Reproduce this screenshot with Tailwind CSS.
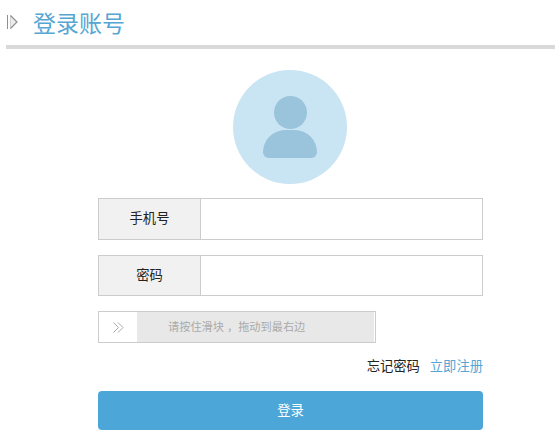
<!DOCTYPE html>
<html lang="zh-CN">
<head>
    <meta charset="UTF-8">
    <meta name="viewport" content="width=device-width, initial-scale=1.0">
    <title>登录账号</title>
    <script src="https://cdn.jsdelivr.net/npm/@tailwindcss/browser@4"></script>
</head>
<body class="bg-white h-[442px] w-[555px] overflow-hidden font-['Liberation_Sans','Noto_Sans_CJK_SC',sans-serif]">
    <!-- Page heading -->
    <div class="ml-[6px] h-[49px] border-b-[4px] border-[#d9d9d9] flex items-start">
        <svg class="mt-[14px] ml-[1px]" width="11" height="16" viewBox="0 0 11 16" fill="none">
            <path d="M0.5 1V15" stroke="#8f8f8f" stroke-width="1"/>
            <path d="M3.5 1.5V14.5" stroke="#b5b5b5" stroke-width="1"/>
            <path d="M3.5 1.5L10 8L3.5 14.5" stroke="#8f8f8f" stroke-width="1.2" fill="#ececec"/>
        </svg>
        <h1 class="ml-[15px] mt-[9px] text-[23px] leading-[30px] font-normal text-[#56a6d3]">登录账号</h1>
    </div>

    <!-- Avatar -->
    <div class="mt-[21px] ml-[233px] w-[114px] h-[114px] rounded-full bg-[#c9e4f3] flex flex-col items-center">
        <div class="mt-[26px] w-[33px] h-[33px] rounded-full bg-[#9ac3dc]"></div>
        <div class="mt-[1px] w-[54px] h-[28px] rounded-t-[27px] rounded-b-[7px] bg-[#9ac3dc]"></div>
    </div>

    <form class="ml-[98px] w-[385px] mt-[14px]">
        <div class="flex h-[42px] border border-[#ccc]">
            <label class="w-[102px] bg-[#f1f1f1] border-r border-[#ccc] flex items-center justify-center text-[13.3px] text-[#222]">手机号</label>
            <input type="text" class="flex-1 bg-white outline-none">
        </div>
        <div class="flex h-[41px] mt-[15px] border border-[#ccc]">
            <label class="w-[102px] bg-[#f1f1f1] border-r border-[#ccc] flex items-center justify-center text-[13.3px] text-[#222]">密码</label>
            <input type="password" class="flex-1 bg-white outline-none">
        </div>

        <!-- Slider -->
        <div class="flex h-[32px] w-[278px] mt-[15px] border border-[#ccc]">
            <div class="w-[38px] flex items-center justify-center">
                <svg width="11" height="11" viewBox="0 0 11 11" fill="none" stroke="#aaa" stroke-width="1">
                    <path d="M0.5 0.5L5.5 5.5L0.5 10.5"/>
                    <path d="M5 0.5L10 5.5L5 10.5"/>
                </svg>
            </div>
            <div class="flex-1 bg-[#e8e8e8] border-r border-white flex items-center pl-[31px] text-[11.2px] text-[#aaa] whitespace-nowrap"><span>请按住滑块</span><span class="ml-[3px]">，</span><span>拖动到最右边</span></div>
        </div>

        <div class="flex justify-end items-center gap-[10px] h-[20px] mt-[14px] text-[13.3px]">
            <a class="text-[#222]">忘记密码</a>
            <a class="text-[#56a6d3]">立即注册</a>
        </div>

        <button type="button" class="block w-full h-[39px] mt-[14px] rounded-[4px] bg-[#4da6d8] text-white text-[13.3px]">登录</button>
    </form>
</body>
</html>
